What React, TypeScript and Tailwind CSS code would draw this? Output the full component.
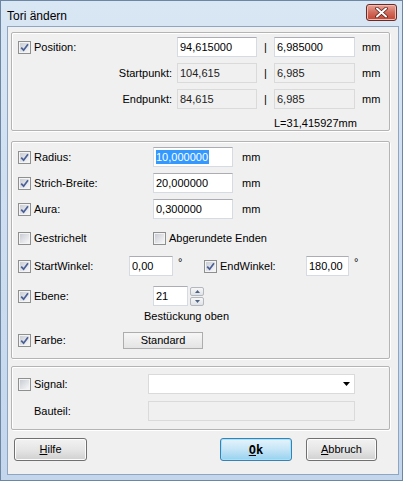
import React from "react";

const Check = ({ checked }: { checked: boolean }) => (
  <span className="w-[13px] h-[13px] shrink-0 border border-[#8e8f8f] bg-[#f4f4f4] p-[1px] flex">
    <span className="flex-1 bg-gradient-to-br from-[#c9cdd4] to-[#f7f7f8] flex items-center justify-center">
      {checked && (
        <svg width="9" height="9" viewBox="0 0 9 9">
          <path d="M1.2 4.6 L3.6 7.2 L8 1.2" fill="none" stroke="#4a5f97" strokeWidth="1.7" />
        </svg>
      )}
    </span>
  </span>
);

const CheckLabel = ({ checked, label, w }: { checked: boolean; label: string; w: string }) => (
  <div className={`flex items-center gap-[3px] shrink-0 ${w}`}>
    <Check checked={checked} />
    <span>{label}</span>
  </div>
);

const Input = ({ value, w, children }: { value?: string; w: string; children?: React.ReactNode }) => (
  <div
    className={`${w} h-[20px] shrink-0 bg-white border border-[#d5dbe3] border-t-[#abadb3] flex items-center pl-[2px] text-black`}
  >
    {children ?? value}
  </div>
);

const ReadOnly = ({ value, w }: { value: string; w: string }) => (
  <div className={`${w} h-[20px] shrink-0 bg-[#f0f0f0] border border-[#dadada] flex items-center pl-[2px] text-[#222]`}>
    {value}
  </div>
);

const Group = ({ className, children }: { className: string; children: React.ReactNode }) => (
  <div
    className={`ml-[3px] w-[379px] border border-[#b4b4b4] rounded-[2px] shadow-[inset_1px_1px_0_#ffffff,1px_1px_0_#ffffff] ${className}`}
  >
    {children}
  </div>
);

const WinButton = ({ children, w, def }: { children: React.ReactNode; w: string; def?: boolean }) => (
  <div
    className={`${w} h-[23px] shrink-0 rounded-[3px] border flex items-center justify-center ${
      def
        ? "border-[#3c7fb1] bg-gradient-to-b from-[#e5f4fc] via-[#c4e5f6] to-[#98d1ef] shadow-[inset_0_0_0_1px_#9fe3fd]"
        : "border-[#707070] bg-gradient-to-b from-[#f2f2f2] via-[#e6e6e6] to-[#d0d0d0] shadow-[inset_0_0_0_1px_#fcfcfc]"
    }`}
  >
    {children}
  </div>
);

export default function App() {
  return (
    <div className="w-[403px] h-[481px] bg-gradient-to-b from-[#d9e6f4] to-[#c3d6ec] border border-[#6c86a3] flex flex-col font-['Liberation_Sans',Arial,sans-serif] text-[11px] text-black overflow-hidden">
      {/* title bar */}
      <div className="h-[25px] shrink-0 flex items-start justify-between pl-[6px] pr-[5px]">
        <span className="text-[12px] mt-[6px] text-black">Tori ändern</span>
        <div className="mt-[3px] w-[31px] h-[17px] rounded-[3px] border border-[#6b2b25] bg-gradient-to-b from-[#e8a497] via-[#d16b5c] to-[#c3432f] shadow-[inset_0_0_0_1px_#eebcb2] flex items-center justify-center">
          <svg width="13" height="11" viewBox="0 0 13 11">
            <path d="M2 1.5 L11 9.5 M11 1.5 L2 9.5" stroke="#5a1f18" strokeWidth="3.6" strokeLinecap="round" />
            <path d="M2 1.5 L11 9.5 M11 1.5 L2 9.5" stroke="#ffffff" strokeWidth="2" strokeLinecap="round" />
          </svg>
        </div>
      </div>

      {/* client area */}
      <div className="ml-[6px] mr-[3px] h-[449px] shrink-0 bg-[#f0f0f0] border border-[#8ea6c2] flex flex-col pt-[5px]">
        {/* Group 1 */}
        <Group className="h-[99px] shrink-0 pt-[4px] pl-[6px]">
          <div className="flex items-center h-[20px]">
            <CheckLabel checked label="Position:" w="w-[159px]" />
            <Input w="w-[80px]" value="94,615000" />
            <span className="w-[17px] text-center">|</span>
            <Input w="w-[81px]" value="6,985000" />
            <span className="ml-[7px]">mm</span>
          </div>
          <div className="flex items-center h-[20px] mt-[6px]">
            <span className="w-[159px] text-right pr-[5px]">Startpunkt:</span>
            <ReadOnly w="w-[80px]" value="104,615" />
            <span className="w-[17px] text-center">|</span>
            <ReadOnly w="w-[81px]" value="6,985" />
            <span className="ml-[7px]">mm</span>
          </div>
          <div className="flex items-center h-[20px] mt-[6px]">
            <span className="w-[159px] text-right pr-[5px]">Endpunkt:</span>
            <ReadOnly w="w-[80px]" value="84,615" />
            <span className="w-[17px] text-center">|</span>
            <ReadOnly w="w-[81px]" value="6,985" />
            <span className="ml-[7px]">mm</span>
          </div>
          <div className="mt-[7px] h-[14px] ml-[256px] leading-[14px]">L=31,415927mm</div>
        </Group>

        {/* Group 2 */}
        <Group className="h-[218px] shrink-0 mt-[10px] pt-[5px] pl-[6px]">
          <div className="flex items-center h-[20px]">
            <CheckLabel checked label="Radius:" w="w-[135px]" />
            <Input w="w-[80px]">
              <span className="bg-[#3399ff] text-white leading-[14px] pr-[1px]">10,000000</span>
            </Input>
            <span className="ml-[9px]">mm</span>
          </div>
          <div className="flex items-center h-[20px] mt-[6px]">
            <CheckLabel checked label="Strich-Breite:" w="w-[135px]" />
            <Input w="w-[80px]" value="20,000000" />
            <span className="ml-[9px]">mm</span>
          </div>
          <div className="flex items-center h-[20px] mt-[6px]">
            <CheckLabel checked label="Aura:" w="w-[135px]" />
            <Input w="w-[80px]" value="0,300000" />
            <span className="ml-[9px]">mm</span>
          </div>
          <div className="flex items-center h-[20px] mt-[9px]">
            <CheckLabel checked={false} label="Gestrichelt" w="w-[135px]" />
            <CheckLabel checked={false} label="Abgerundete Enden" w="w-[150px]" />
          </div>
          <div className="flex items-center h-[20px] mt-[8px]">
            <CheckLabel checked label="StartWinkel:" w="w-[111px]" />
            <Input w="w-[44px]" value="0,00" />
            <span className="w-[31px] pl-[5px] self-start leading-[12px]">°</span>
            <CheckLabel checked label="EndWinkel:" w="w-[102px]" />
            <Input w="w-[43px]" value="180,00" />
            <span className="pl-[5px] self-start leading-[12px]">°</span>
          </div>
          <div className="flex items-center h-[20px] mt-[10px]">
            <CheckLabel checked label="Ebene:" w="w-[135px]" />
            <Input w="w-[35px]" value="21" />
            <div className="ml-[2px] w-[14px] h-[19px] flex flex-col gap-[1px]">
              <div className="h-[9px] border border-[#b3b8be] rounded-[2px] bg-gradient-to-b from-[#f7f7f7] to-[#dfe2e6] flex items-center justify-center">
                <svg width="5" height="3" viewBox="0 0 5 3">
                  <path d="M0 3 L2.5 0 L5 3 Z" fill="#4d6185" />
                </svg>
              </div>
              <div className="h-[9px] border border-[#b3b8be] rounded-[2px] bg-gradient-to-b from-[#f7f7f7] to-[#dfe2e6] flex items-center justify-center">
                <svg width="5" height="3" viewBox="0 0 5 3">
                  <path d="M0 0 L2.5 3 L5 0 Z" fill="#4d6185" />
                </svg>
              </div>
            </div>
          </div>
          <div className="mt-[3px] h-[14px] leading-[14px] ml-[126px]">Bestückung oben</div>
          <div className="flex items-center h-[20px] mt-[7px]">
            <CheckLabel checked label="Farbe:" w="w-[105px]" />
            <div className="w-[80px] h-[17px] border border-[#adadad] bg-gradient-to-b from-[#f6f6f6] to-[#e4e4e4] flex items-center justify-center">
              Standard
            </div>
          </div>
        </Group>

        {/* Group 3 */}
        <Group className="h-[64px] shrink-0 mt-[7px] pt-[7px] pl-[6px]">
          <div className="flex items-center h-[20px]">
            <CheckLabel checked={false} label="Signal:" w="w-[130px]" />
            <div className="w-[207px] h-[20px] bg-white border border-[#dadada] flex items-center justify-end pr-[4px]">
              <svg width="7" height="4" viewBox="0 0 7 4">
                <path d="M0 0 L7 0 L3.5 4 Z" fill="#000" />
              </svg>
            </div>
          </div>
          <div className="flex items-center h-[20px] mt-[7px]">
            <span className="w-[130px] pl-[16px]">Bauteil:</span>
            <ReadOnly w="w-[207px]" value="" />
          </div>
        </Group>

        {/* Buttons */}
        <div className="flex items-center mt-[8px] ml-[6px]">
          <WinButton w="w-[73px]">
            <span>
              <span className="underline">H</span>ilfe
            </span>
          </WinButton>
          <div className="w-[133px]" />
          <WinButton w="w-[72px]" def>
            <span className="font-bold text-[12px] font-['DejaVu_Sans_Mono',monospace]">
              <span className="underline">O</span>k
            </span>
          </WinButton>
          <div className="w-[14px]" />
          <WinButton w="w-[71px]">
            <span>
              <span className="underline">A</span>bbruch
            </span>
          </WinButton>
        </div>
      </div>
    </div>
  );
}
